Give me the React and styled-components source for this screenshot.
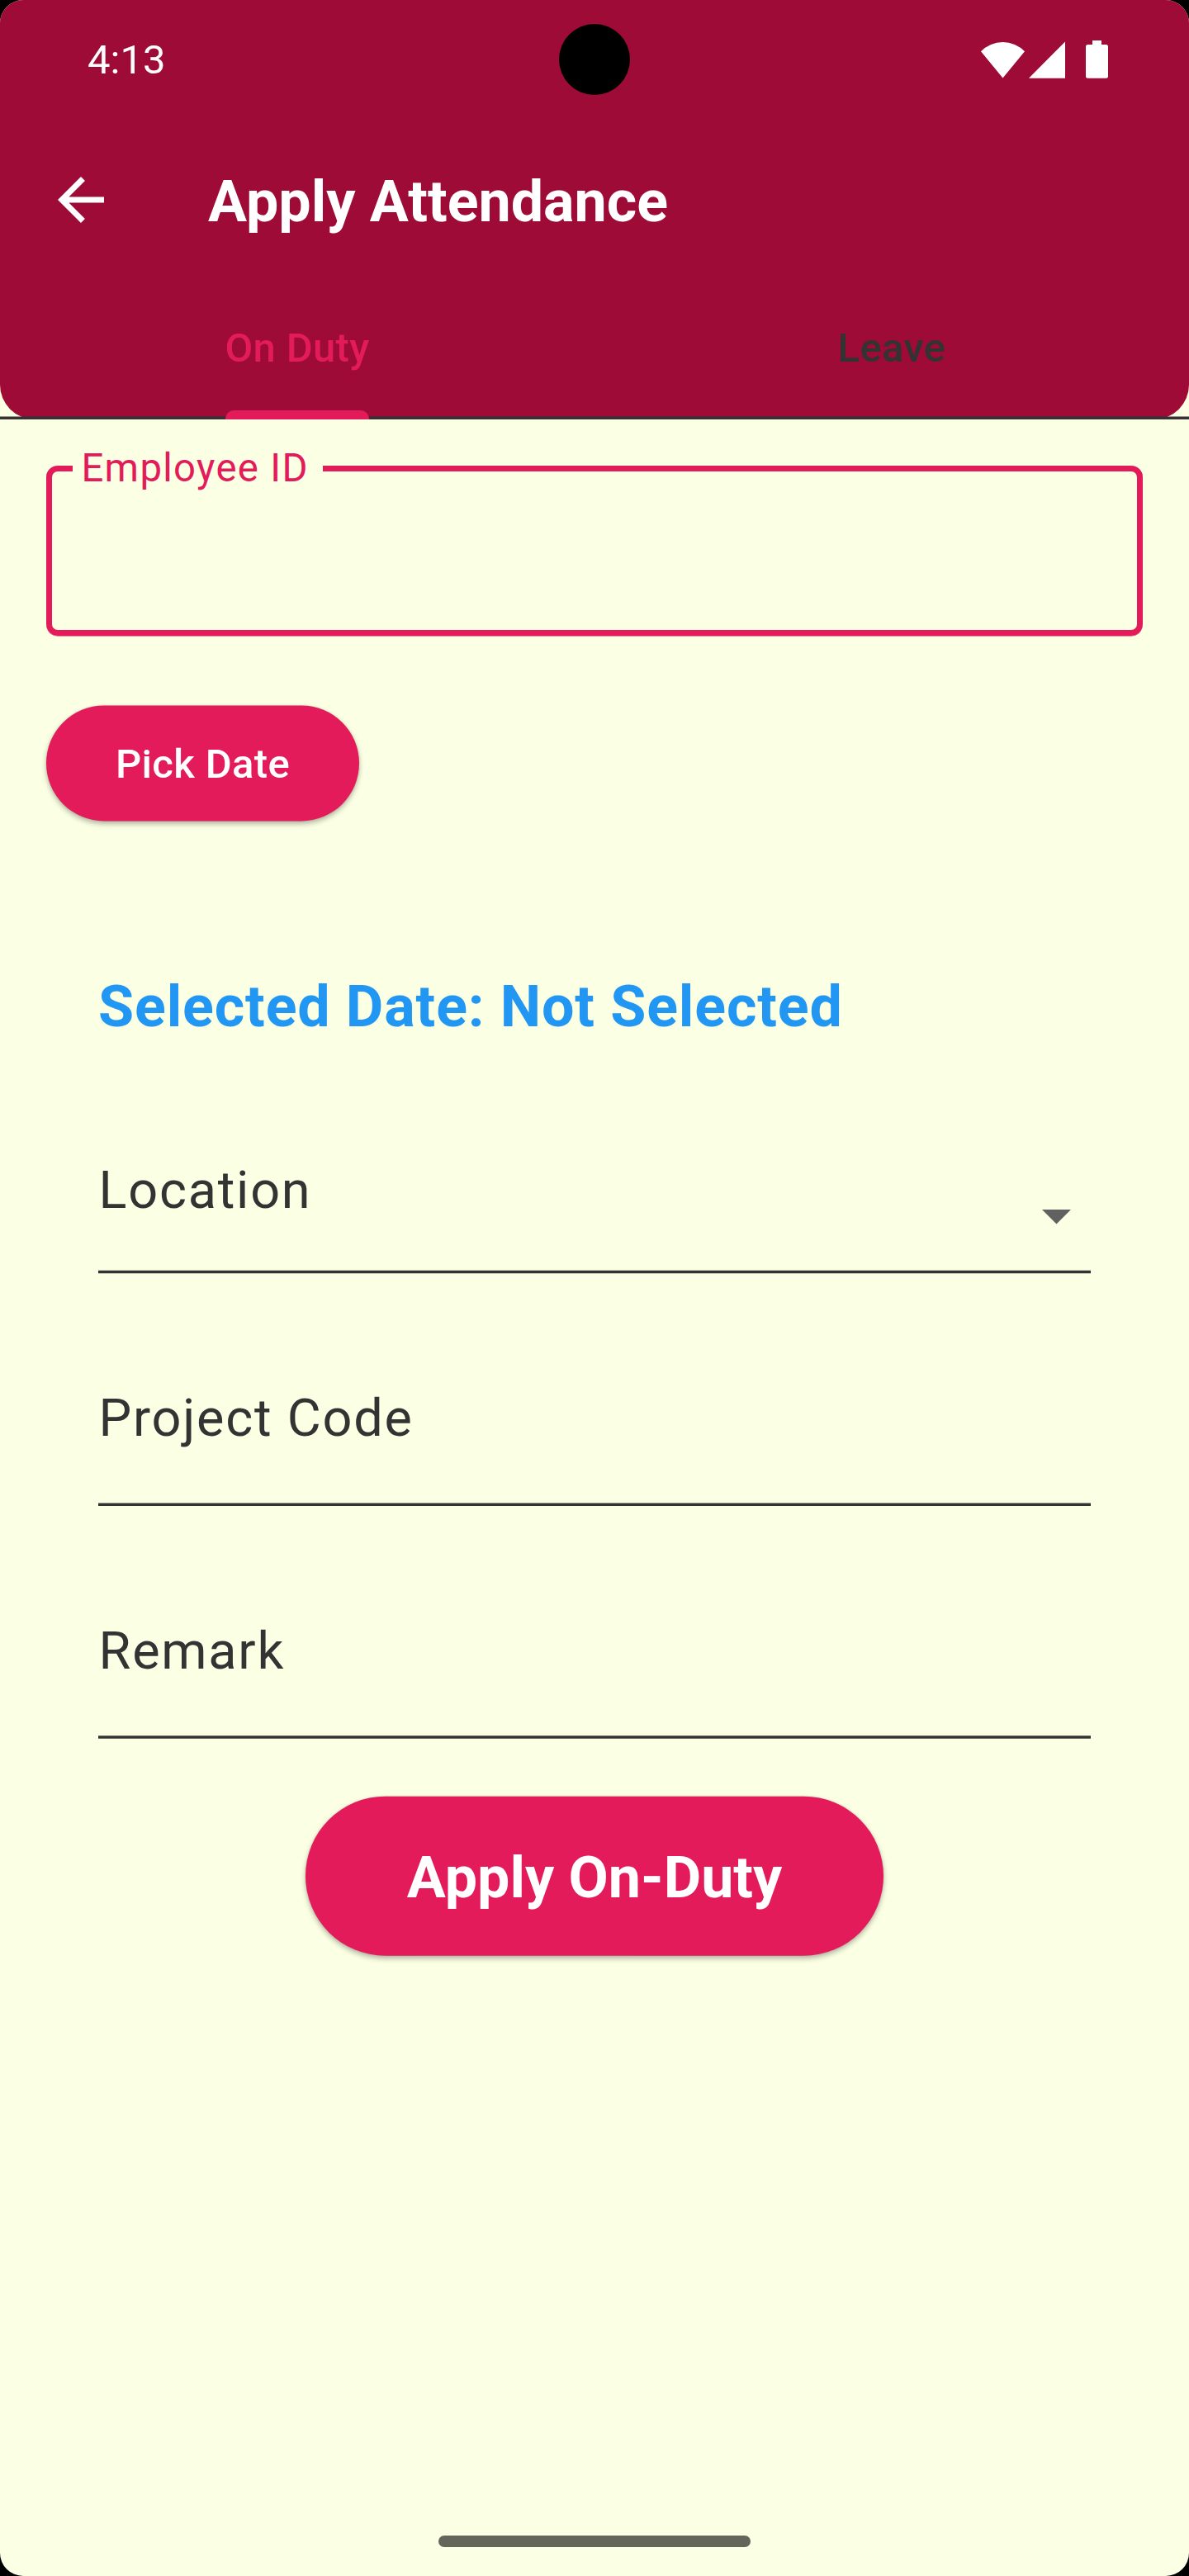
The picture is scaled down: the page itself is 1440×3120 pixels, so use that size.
import React from "react";
import styled, { createGlobalStyle } from "styled-components";

const color = {
  header: "#9e0b36",
  pink: "#e41b5a",
  paper: "#fbffe3",
  ink: "#333333",
  blue: "#2196f3",
  caret: "#616161",
};

const GlobalStyle = createGlobalStyle`
  * { box-sizing: border-box; }
  html, body { margin: 0; padding: 0; background: #000; }
  body { font-family: Roboto, "Noto Sans", sans-serif; }
`;

const Screen = styled.div`
  width: 1440px;
  height: 3120px;
  display: flex;
  flex-direction: column;
  background: ${color.paper};
  border-radius: 28px;
  overflow: hidden;
`;

const Header = styled.header`
  position: relative;
  height: 508px;
  flex: none;
  display: flex;
  flex-direction: column;
`;

const HeaderFill = styled.div`
  position: absolute;
  inset: 0;
  background: ${color.header};
  border-radius: 0 0 42px 42px;
`;

const StatusBar = styled.div`
  position: relative;
  height: 144px;
  display: flex;
  justify-content: space-between;
  align-items: center;
  padding: 0 98px 0 106px;
`;

const Clock = styled.span`
  padding-top: 2px;
  color: #fff;
  font-size: 49px;
  line-height: 58px;
`;

const Camera = styled.div`
  position: absolute;
  left: 677px;
  top: 29px;
  width: 86px;
  height: 86px;
  border-radius: 50%;
  background: #000;
`;

const StatusIcons = styled.div`
  display: flex;
  align-items: flex-end;
  height: 46px;
`;

const StatusIcon = styled.svg`
  display: block;
  flex: none;
  margin-left: ${(p) => p.$gap || 0}px;
  fill: #fff;
`;

const AppBar = styled.div`
  position: relative;
  height: 196px;
  display: flex;
  align-items: center;
  padding-left: 56px;
`;

const BackButton = styled.button`
  border: 0;
  padding: 0;
  background: none;
  width: 84px;
  height: 84px;
  margin-right: 112px;
  svg { display: block; fill: #fff; }
`;

const Title = styled.h1`
  margin: 4px 0 0;
  color: #fff;
  font-size: 70px;
  line-height: 82px;
  font-weight: 700;
  white-space: nowrap;
`;

const Tabs = styled.nav`
  position: relative;
  height: 168px;
  display: flex;
  background: linear-gradient(
    to bottom,
    transparent 164px,
    rgba(51, 51, 51, 0.5) 164px 165px,
    ${color.ink} 165px
  );
`;

const Tab = styled.div`
  flex: 1;
  display: flex;
  flex-direction: column;
  justify-content: space-between;
  align-items: center;
  padding-top: 53px;
`;

const TabLabel = styled.span`
  font-size: 49px;
  line-height: 57px;
  font-weight: 500;
  letter-spacing: 0.35px;
  color: ${(p) => (p.$active ? color.pink : color.ink)};
`;

const Indicator = styled.span`
  width: 174px;
  height: 11px;
  border-radius: 10px 10px 0 0;
  background: ${color.pink};
`;

const Form = styled.main`
  flex: 1;
  display: flex;
  flex-direction: column;
  align-items: flex-start;
  padding: 32px 56px 0;
`;

const OutlinedField = styled.fieldset`
  margin: 0;
  width: 100%;
  height: 230px;
  padding: 0 0 0 25px;
  border: 7px solid ${color.pink};
  border-radius: 14px;
  box-shadow: 0 0.5px 0 ${color.pink};
`;

const Legend = styled.legend`
  width: 303px;
  height: 55px;
  padding: 0 0 0 10.4px;
  color: ${color.pink};
  font-size: 47.25px;
  line-height: 55px;
  letter-spacing: 1.35px;
  white-space: nowrap;
`;

const PillButton = styled.button`
  position: relative;
  isolation: isolate;
  flex: none;
  border: 0;
  padding: 3px 0 0;
  background: none;
  color: #fff;
  font-family: inherit;
  white-space: nowrap;
  &::before {
    content: "";
    position: absolute;
    inset: 0;
    z-index: -1;
    border-radius: 100px;
    background: ${color.pink};
    box-shadow: 0 3.5px 6px rgba(0, 0, 0, 0.28), 0 0 3px rgba(0, 0, 0, 0.1);
    transform: translateY(${(p) => p.$nudge}px);
  }
`;

const PickButton = styled(PillButton)`
  width: 379px;
  height: 140px;
  margin-top: 84px;
  font-size: 49px;
  line-height: 57px;
  font-weight: 500;
  letter-spacing: 0.35px;
`;

const ApplyButton = styled(PillButton)`
  align-self: center;
  width: 700px;
  height: 193px;
  margin-top: 69px;
  font-size: 70px;
  line-height: 82px;
  font-weight: 700;
`;

const Details = styled.section`
  width: 100%;
  padding: 0 63px;
  display: flex;
  flex-direction: column;
`;

const SelectedDate = styled.p`
  margin: 184px 0 0;
  color: ${color.blue};
  font-size: 70px;
  line-height: 82px;
  font-weight: 700;
  letter-spacing: 0.875px;
  white-space: nowrap;
`;

const LineField = styled.div`
  display: flex;
  justify-content: space-between;
  height: ${(p) => p.$height}px;
  margin-top: ${(p) => p.$gap}px;
  padding: 1px 0 0 0.6px;
  color: ${color.ink};
  font-size: 63px;
  line-height: 74px;
  letter-spacing: 1.75px;
  background: linear-gradient(
      to bottom,
      rgba(51, 51, 51, ${(p) => p.$rows[0]}) 1px,
      ${color.ink} 1px 3px,
      rgba(51, 51, 51, ${(p) => p.$rows[1]}) 3px 4px,
      rgba(51, 51, 51, ${(p) => p.$rows[2]}) 4px
    )
    left bottom / 100% 5px no-repeat;
`;

const Caret = styled.svg`
  display: block;
  margin: 60px 24px 0 0;
  fill: ${color.caret};
`;

const HomeBar = styled.div`
  align-self: center;
  width: 378px;
  height: 14px;
  margin-bottom: 35px;
  border-radius: 7px;
  background: #64665b;
`;

export default function App() {
  return (
    <>
      <GlobalStyle />
      <Screen>
        <Header>
          <HeaderFill />
          <StatusBar>
            <Clock>4:13</Clock>
            <Camera />
            <StatusIcons>
              <StatusIcon width="54" height="45" viewBox="0 0 54 45">
                <path d="M0 12.200A37 37 0 0 1 53 12.200L26.500 44.500z" />
              </StatusIcon>
              <StatusIcon $gap={4} width="44" height="45" viewBox="0 0 44 45">
                <path d="M44 .5V44.700H0z" />
              </StatusIcon>
              <StatusIcon $gap={25} width="27" height="46" viewBox="0 0 27 46">
                <path d="M8 0h11v5h5.500a2.500 2.500 0 0 1 2.500 2.500v35.700a2.500 2.500 0 0 1-2.500 2.500h-22a2.500 2.500 0 0 1-2.500-2.500V7.500a2.500 2.500 0 0 1 2.500-2.500H8z" />
              </StatusIcon>
            </StatusIcons>
          </StatusBar>
          <AppBar>
            <BackButton aria-label="Back">
              <svg width="84" height="84" viewBox="0 0 24 24">
                <path d="M20 11H7.830l5.590-5.590L12 4l-8 8 8 8 1.410-1.410L7.830 13H20v-2z" />
              </svg>
            </BackButton>
            <Title>Apply Attendance</Title>
          </AppBar>
          <Tabs>
            <Tab>
              <TabLabel $active>On Duty</TabLabel>
              <Indicator />
            </Tab>
            <Tab>
              <TabLabel>Leave</TabLabel>
            </Tab>
          </Tabs>
        </Header>
        <Form>
          <OutlinedField>
            <Legend>Employee ID</Legend>
          </OutlinedField>
          <PickButton $nudge={0.4}>Pick Date</PickButton>
          <Details>
            <SelectedDate>Selected Date: Not Selected</SelectedDate>
            <LineField $height={139} $gap={144} $rows={[0.25, 1, 0.25]}>
              <span>Location</span>
              <Caret width="35" height="18" viewBox="0 0 35 18">
                <path d="M0 0H35L17.500 17.500z" />
              </Caret>
            </LineField>
            <LineField $height={145} $gap={137} $rows={[0.5, 1, 0]}>
              <span>Project Code</span>
            </LineField>
            <LineField $height={145} $gap={137} $rows={[0.75, 0.75, 0]}>
              <span>Remark</span>
            </LineField>
          </Details>
          <ApplyButton $nudge={-0.35}>Apply On-Duty</ApplyButton>
        </Form>
        <HomeBar />
      </Screen>
    </>
  );
}
